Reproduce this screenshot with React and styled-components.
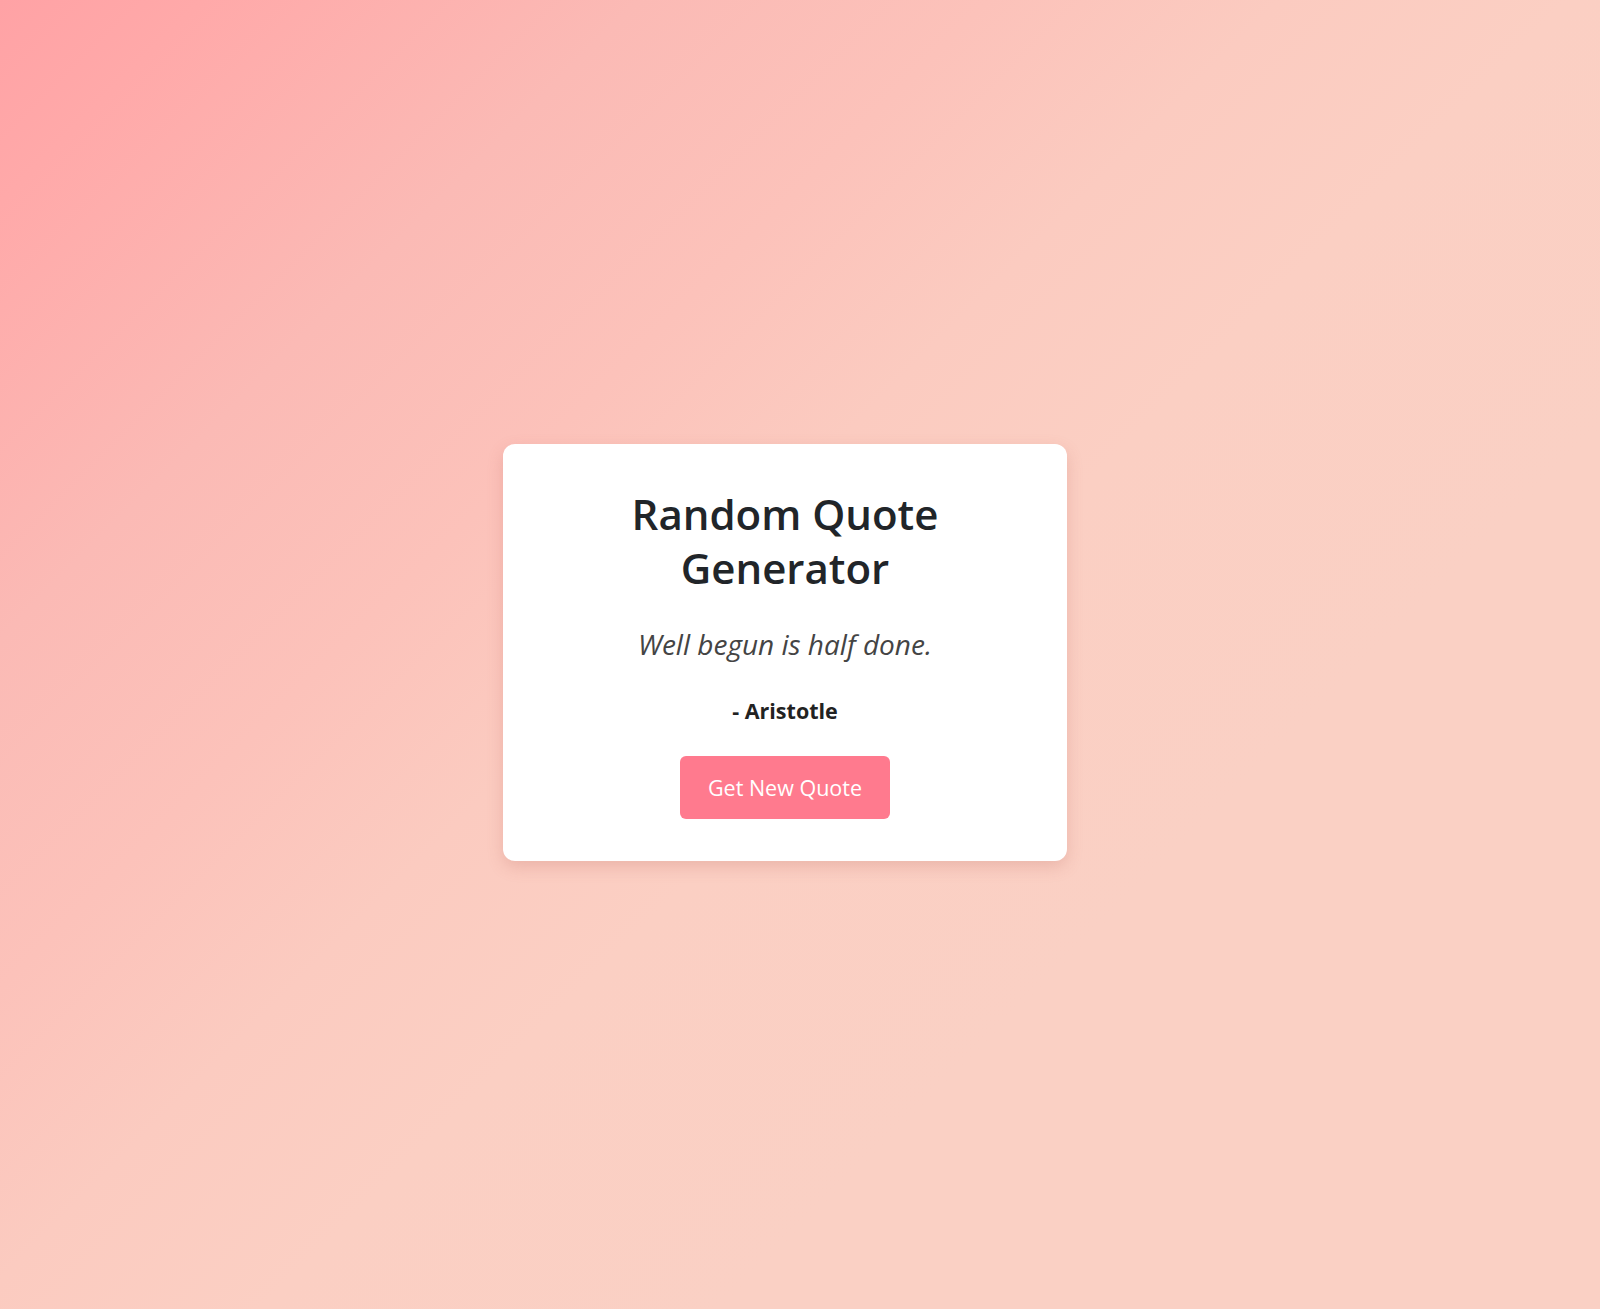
import styled, { createGlobalStyle } from 'styled-components';

const GlobalStyle = createGlobalStyle`
  html, body {
    margin: 0;
    padding: 0;
  }

  body {
    font-family: "Open Sans", "Noto Sans", sans-serif;
    background: linear-gradient(
      135deg,
      #ffa2a5 0%,
      #ffa9a9 7%,
      #fbbab5 22%,
      #fcc2ba 34%,
      #fbcbc0 44%,
      #fbcfc3 54%,
      #fad0c4 70%,
      #fad0c4 100%
    );
    min-height: 100vh;
  }
`;

const Page = styled.div`
  min-height: 100vh;
  display: flex;
  align-items: center;
  justify-content: center;
  padding: 0 30px 4px 0;
  box-sizing: border-box;
`;

const Card = styled.div`
  width: 564px;
  box-sizing: border-box;
  padding: 43px 40px 42px;
  background: #ffffff;
  border-radius: 12px;
  box-shadow: 0 6px 16px rgba(180, 90, 80, 0.22);
  text-align: center;
`;

const Title = styled.h1`
  margin: 0 auto;
  max-width: 400px;
  font-size: 42px;
  font-weight: 600;
  line-height: 54px;
  color: #212529;
`;

const Quote = styled.p`
  margin: 31px 0 0;
  font-size: 28px;
  font-style: italic;
  line-height: 36px;
  color: #444;
`;

const Author = styled.p`
  margin: 34px 0 0;
  font-size: 21.5px;
  font-weight: 700;
  line-height: 30px;
  color: #222;
`;

const Button = styled.button`
  margin-top: 30px;
  height: 63px;
  padding: 0 28px;
  border: none;
  border-radius: 6px;
  background-color: #ff7a8e;
  color: #fff;
  font-family: inherit;
  font-size: 21.5px;
  cursor: pointer;
`;

const App = () => {
  return (
    <>
      <GlobalStyle />
      <Page>
        <Card>
          <Title>Random Quote Generator</Title>
          <Quote>Well begun is half done.</Quote>
          <Author>- Aristotle</Author>
          <Button>Get New Quote</Button>
        </Card>
      </Page>
    </>
  );
};

export default App;
